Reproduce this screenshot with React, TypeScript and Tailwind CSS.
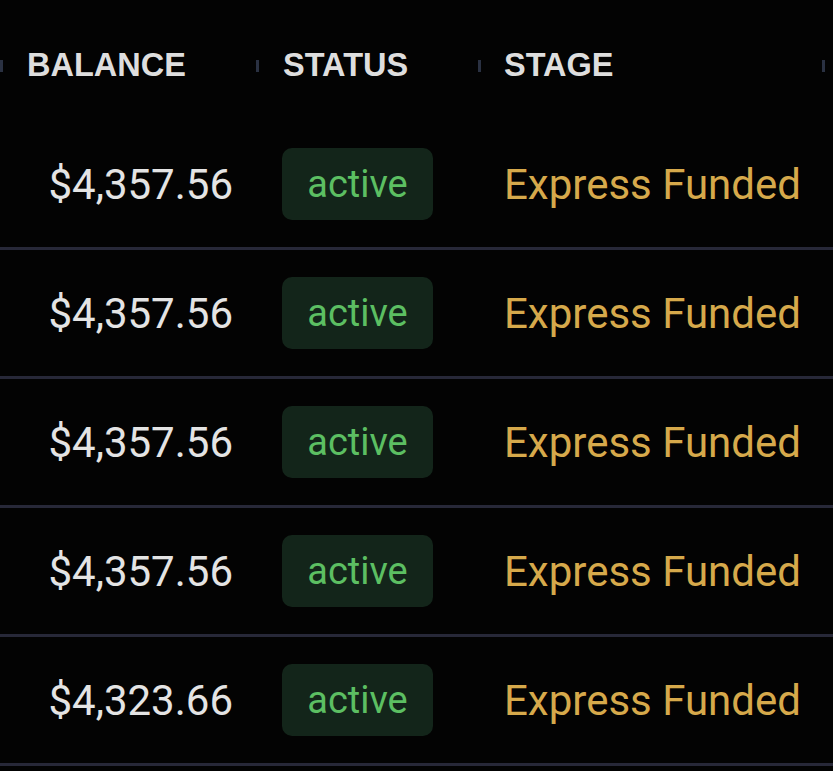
import React from "react";

const rows = ["$4,357.56", "$4,357.56", "$4,357.56", "$4,357.56", "$4,323.66"];

function Marker() {
  return <div className="w-[3px] h-[12px] bg-[#2a3142]" />;
}

export default function App() {
  return (
    <div className="w-[833px] h-[771px] bg-[#030303] overflow-hidden" style={{ fontFamily: "Roboto, 'Liberation Sans', sans-serif" }}>
      <div className="h-[121px] flex items-center" style={{ fontFamily: "'Liberation Sans', Arial, sans-serif" }}>
        <div className="w-[256px] flex items-center shrink-0 pt-[10px]">
          <Marker />
          <div className="ml-[24px] text-[32.5px] font-bold text-[#dedede] leading-none">BALANCE</div>
        </div>
        <div className="w-[222px] flex items-center shrink-0 pt-[10px]">
          <Marker />
          <div className="ml-[24px] text-[32.5px] font-bold text-[#dedede] leading-none">STATUS</div>
        </div>
        <div className="flex-1 flex items-center pt-[10px]">
          <Marker />
          <div className="ml-[23px] text-[32.5px] font-bold text-[#dedede] leading-none">STAGE</div>
          <div className="ml-auto mr-[8px]">
            <Marker />
          </div>
        </div>
      </div>
      {rows.map((b, i) => (
        <div key={i} className="h-[129px] flex items-center border-b-[3px] border-[#272838]">
          <div className="w-[256px] shrink-0 text-right pr-[23px] text-[42px] text-[#e4e4e4]">{b}</div>
          <div className="w-[222px] shrink-0 pl-[26px]">
            <div className="inline-flex items-center justify-center w-[151px] h-[72px] rounded-[10px] bg-[#13251a] text-[38px] text-[#5cbf62]">active</div>
          </div>
          <div className="flex-1 pl-[26px] text-[42px] text-[#d6a94b] whitespace-nowrap">Express Funded</div>
        </div>
      ))}
    </div>
  );
}
